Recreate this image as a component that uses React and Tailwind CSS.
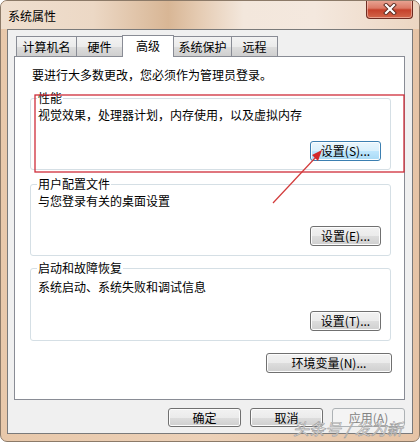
import React from "react";

const FONT = "font-['SimSun','Noto_Sans_CJK_SC','Liberation_Sans',sans-serif]";

function WinButton({ children, className = "", variant = "normal" }) {
  const base =
    "flex items-center justify-center rounded-[3px] border text-[12px] leading-none";
  const styles = {
    normal:
      "border-[#707070] bg-[linear-gradient(#f2f2f2_0%,#ebebeb_50%,#dddddd_51%,#cfcfcf_100%)] text-black shadow-[inset_0_0_0_1px_#fcfcfc]",
    hot:
      "border-[#3c7fb1] bg-[linear-gradient(#eaf6fd_0%,#d9f0fc_50%,#bee6fd_51%,#a7d9f5_100%)] text-black shadow-[inset_0_0_0_1px_#fbfdfe]",
    disabled:
      "border-[#adb2b5] bg-[#f4f4f4] text-[#838383]",
  };
  return <div className={`${base} ${styles[variant]} ${className}`}>{children}</div>;
}

function GroupBox({ legend, desc, button, variant, className = "" }) {
  return (
    <div
      className={`relative ml-[15px] w-[361px] rounded-[3px] border border-[#d5dfe5] flex flex-col justify-between pl-[7px] pr-[9px] ${className}`}
    >
      <span className="absolute -top-[8px] left-[6px] bg-white px-[1px] leading-[14px] text-[12px]">
        {legend}
      </span>
      <div className="leading-[14px] text-[12px]">{desc}</div>
      <div className="flex justify-end">
        <WinButton variant={variant} className="w-[71px] h-[20px]">
          {button}
        </WinButton>
      </div>
    </div>
  );
}

function Tab({ label, w, selected }) {
  if (selected) {
    return (
      <div
        className={`relative z-10 -ml-px h-[22px] -mb-px ${w} border border-b-0 border-[#898c95] bg-white flex items-start justify-center pt-[3px] text-[12px] leading-[14px]`}
      >
        {label}
      </div>
    );
  }
  return (
    <div
      className={`-ml-px first:ml-0 h-[20px] ${w} border border-b-0 border-[#898c95] bg-[linear-gradient(#f3f3f3_0%,#ebebeb_50%,#dddddd_51%,#cfcfcf_100%)] flex items-center justify-center text-[12px] leading-[14px] pt-[1px]`}
    >
      {label}
    </div>
  );
}

export default function App() {
  return (
    <div
      className={`${FONT} relative w-[420px] h-[442px] overflow-hidden rounded-[7px] border border-[#8c7a68] bg-[linear-gradient(90deg,#e8c8aa_0%,#ecd1b8_50%,#e6c4a6_100%)] text-black`}
    >
      {/* title bar */}
      <div className="h-[28px] flex items-start justify-between bg-[linear-gradient(90deg,#efdfcf_0%,#ecd8c5_22%,#d8b695_40%,#e6cdb5_48%,#f3e7dc_58%,#f4e8de_75%,#ecd6c2_100%)]">
        <div className="pl-[7px] pt-[8px] text-[12px] leading-[14px]">系统属性</div>
        <div className="-mt-px mr-[6px] w-[47px] h-[19px] rounded-b-[4px] border border-t-0 border-[#6e2c22] bg-[linear-gradient(#e9a796_0%,#dc7a66_45%,#c5412b_55%,#d2664a_100%)] flex items-center justify-center shadow-[inset_0_0_0_1px_rgba(255,220,210,0.5)]">
          <svg width="14" height="12" viewBox="0 0 14 12">
            <path d="M3 2 L11 10 M11 2 L3 10" stroke="#5a2a20" strokeWidth="4" strokeLinecap="square" />
            <path d="M3 2 L11 10 M11 2 L3 10" stroke="#ffffff" strokeWidth="2.2" strokeLinecap="square" />
          </svg>
        </div>
      </div>

      {/* client area */}
      <div className="mx-[6px] h-[405px] border border-[#7a7a7a] bg-[#f0f0f0] flex flex-col">
        {/* tabs */}
        <div className="mt-[5px] pl-[8px] h-[21px] flex items-end">
          <Tab label="计算机名" w="w-[61px]" />
          <Tab label="硬件" w="w-[47px]" />
          <Tab label="高级" w="w-[52px]" selected />
          <Tab label="系统保护" w="w-[59px]" />
          <Tab label="远程" w="w-[47px]" />
        </div>

        {/* panel */}
        <div className="ml-[6px] mr-[7px] h-[344px] border border-[#898c95] bg-white flex flex-col">
          <div className="pt-[11px] pl-[17px] text-[12px] leading-[14px]">
            要进行大多数更改，您必须作为管理员登录。
          </div>
          <GroupBox
            className="mt-[16px] h-[72px] pt-[9px] pb-[8px]"
            legend="性能"
            desc="视觉效果，处理器计划，内存使用，以及虚拟内存"
            button="设置(S)..."
            variant="hot"
          />
          <GroupBox
            className="mt-[14px] h-[72px] pt-[9px] pb-[9px]"
            legend="用户配置文件"
            desc="与您登录有关的桌面设置"
            button="设置(E)..."
            variant="normal"
          />
          <GroupBox
            className="mt-[12px] h-[73px] pt-[11px] pb-[9px]"
            legend="启动和故障恢复"
            desc="系统启动、系统失败和调试信息"
            button="设置(T)..."
            variant="normal"
          />
          <div className="mt-[12px] flex justify-end pr-[12px]">
            <WinButton className="w-[126px] h-[20px]">环境变量(N)...</WinButton>
          </div>
        </div>

        {/* dialog buttons */}
        <div className="mt-[8px] flex justify-end gap-[9px] pr-[7px]">
          <WinButton className="w-[73px] h-[19px]">确定</WinButton>
          <WinButton className="w-[73px] h-[19px]">取消</WinButton>
          <WinButton className="w-[73px] h-[19px]" variant="disabled">应用(A)</WinButton>
        </div>
      </div>

      {/* annotation: red rectangle + arrow */}
      <svg className="absolute -left-px -top-px pointer-events-none" width="420" height="442">
        <rect x="35" y="95" width="369" height="77" fill="none" stroke="#cf2d3a" strokeWidth="1.3" />
        <line x1="273" y1="203" x2="316" y2="157" stroke="#d23a3a" strokeWidth="1.2" />
        <polygon points="322,150 312,155 318,161" fill="#d42a2a" />
      </svg>

      {/* watermark */}
      <div className="absolute left-[292px] top-[418px] text-[16px] leading-[18px] italic text-white/80 [-webkit-text-stroke:0.6px_#9a9a9a] whitespace-nowrap pointer-events-none">
        头条号 / 发为新
      </div>
    </div>
  );
}
